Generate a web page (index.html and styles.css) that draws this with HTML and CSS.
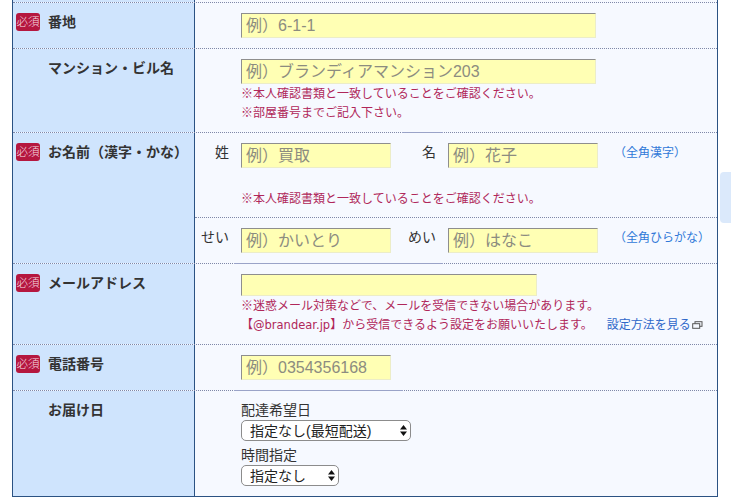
FILE: index.html
```html
<!DOCTYPE html>
<html lang="ja">
<head>
  <meta charset="UTF-8">
  <title>お届け先入力</title>
  <link rel="stylesheet" href="styles.css">
</head>
<body>
  <div class="side-tab"></div>
  <form class="form">
    <div class="top-gap"><div class="head"></div><div></div></div>

    <div class="row">
      <div class="head"><span class="badge">必須</span><span class="label">番地</span></div>
      <div class="cell"><input class="inp inp-l" placeholder="例）6-1-1"></div>
    </div>

    <div class="row">
      <div class="head no-badge"><span class="label">マンション・ビル名</span></div>
      <div class="cell cell-notes">
        <input class="inp inp-l" placeholder="例）ブランディアマンション203">
        <p class="note">※本人確認書類と一致していることをご確認ください。</p>
        <p class="note">※部屋番号までご記入下さい。</p>
      </div>
    </div>

    <div class="row seg-name">
      <div class="head"><span class="badge">必須</span><span class="label">お名前（漢字・かな）</span></div>
      <div class="split">
        <div class="sub sub-notes">
          <div class="pair">
            <span class="pre">姓</span><input class="inp inp-s" placeholder="例）買取">
            <span class="pre pre-2">名</span><input class="inp inp-s" placeholder="例）花子">
            <span class="hint">（全角漢字）</span>
          </div>
          <p class="note note-far">※本人確認書類と一致していることをご確認ください。</p>
        </div>
        <div class="sub sub-line">
          <div class="pair">
            <span class="pre">せい</span><input class="inp inp-s" placeholder="例）かいとり">
            <span class="pre pre-2">めい</span><input class="inp inp-s" placeholder="例）はなこ">
            <span class="hint">（全角ひらがな）</span>
          </div>
        </div>
      </div>
    </div>

    <div class="row seg-mail">
      <div class="head"><span class="badge">必須</span><span class="label">メールアドレス</span></div>
      <div class="cell cell-notes">
        <input class="inp inp-m">
        <p class="note">※迷惑メール対策などで、メールを受信できない場合があります。</p>
        <p class="note">【<span class="domain">@brandear.jp</span>】から受信できるよう設定をお願いいたします。<a class="how" href="#">設定方法を見る<svg class="ext" width="11" height="8" viewBox="0 0 11 8"><rect x="3" y="0.7" width="7" height="4.6" fill="none" stroke="#555" stroke-width="1"/><rect x="0.7" y="2.7" width="7" height="4.6" fill="#f6f9ff" stroke="#555" stroke-width="1"/></svg></a></p>
      </div>
    </div>

    <div class="row">
      <div class="head"><span class="badge">必須</span><span class="label">電話番号</span></div>
      <div class="cell"><input class="inp inp-s" placeholder="例）0354356168"></div>
    </div>

    <div class="row seg-date">
      <div class="head no-badge"><span class="label">お届け日</span></div>
      <div class="cell cell-date">
        <div class="cap">配達希望日</div>
        <div class="sel sel-l">
          <select><option>指定なし(最短配送)</option></select>
          <svg class="updown" width="7" height="11" viewBox="0 0 7 11"><path d="M3.5 0L7 4.5H0zM3.5 11L0 6.5H7z" fill="#111"/></svg>
        </div>
        <div class="cap cap-2">時間指定</div>
        <div class="sel sel-s">
          <select><option>指定なし</option></select>
          <svg class="updown" width="7" height="11" viewBox="0 0 7 11"><path d="M3.5 0L7 4.5H0zM3.5 11L0 6.5H7z" fill="#111"/></svg>
        </div>
      </div>
    </div>
  </form>
</body>
</html>
```

FILE: styles.css
```css
html, body { height: 499px; overflow: hidden; }
body {
  margin: 0;
  background: #fff;
  color: #333;
  font-family: "Liberation Sans", "Noto Sans CJK JP", sans-serif;
  font-size: 14px;
}
.side-tab {
  position: absolute;
  left: 720px; top: 172px;
  width: 11px; height: 51px;
  background: #dbe9fb;
  border-radius: 4px 0 0 4px;
}
.form {
  width: 704px;
  margin-left: 12px;
  border: solid #2b5283;
  border-width: 0 1px 1px 1px;
  background: #f6f9ff;
}
.top-gap, .row {
  display: grid;
  grid-template-columns: 182px 1fr;
}
.top-gap { height: 2px; }
.row {
  position: relative;
  border-top: 1px dotted #7f88a8;
}
.head {
  display: flex;
  align-items: flex-start;
  background: #cfe4fd;
  border-right: 1px solid #2b5283;
  padding: 10px 0 0 3px;
}
.top-gap .head { padding: 0; }
.no-badge { padding-left: 35px; }
.badge {
  width: 24px; height: 18px;
  margin-right: 8px;
  background: #b5173f;
  border-radius: 3px;
  color: #f6dfe4;
  font-size: 11.5px;
  line-height: 18px;
  font-weight: 300;
  text-align: center;
  white-space: nowrap;
}
.label {
  font-weight: bold;
  line-height: 18px;
  color: #333;
  white-space: nowrap;
}
.cell { padding: 10px 0 10px 46px; }
.cell-notes { padding-bottom: 9px; }
.cell-notes .inp { margin-bottom: 1px; }
.cell-date { padding-top: 9px; }

.inp {
  display: block;
  box-sizing: border-box;
  height: 25px;
  padding: 0 4px;
  background: #ffffb4;
  border: 1px solid;
  border-color: #8e8e8e #ecedc8 #ecedc8 #8e8e8e;
  border-radius: 0;
  font: 16px "Liberation Sans", "Noto Sans CJK JP", sans-serif;
  color: #333;
}
.inp::placeholder { color: #8c8c80; opacity: 1; }
.inp-l { width: 355px; }
.inp.inp-m { width: 296px; height: 22px; }
.inp-s { width: 150px; }

.note {
  margin: 0;
  font-size: 12px;
  line-height: 19px;
  color: #b0275a;
  white-space: nowrap;
}
.note-far { margin: 22px 0 0 46px; }
.domain { font-family: "DejaVu Sans", sans-serif; font-size: 11.5px; }
.how { margin-left: 14px; color: #2f67c9; text-decoration: none; }
.ext { margin-left: 1px; }

.split { display: flex; flex-direction: column; }
.sub { padding: 10px 0; }
.sub-notes { padding-bottom: 8px; }
.sub-line { border-top: 1px dotted #7f88a8; }
.pair { display: flex; align-items: flex-start; }
.pre { width: 34px; margin-right: 12px; text-align: right; line-height: 18px; white-space: nowrap; }
.pre-2 { width: 45px; margin-right: 12px; }
.hint {
  margin: 1px 0 0 16px;
  font-size: 12px;
  line-height: 18px;
  color: #2f78d8;
  white-space: nowrap;
}

.cap { line-height: 20px; font-size: 14px; }
.cap-2 { margin-top: 4px; }
.sel { position: relative; }
.sel select {
  display: block;
  box-sizing: border-box;
  height: 21px;
  padding: 0 0 0 8px;
  appearance: none;
  background: #fff;
  border: 1px solid #8c8c8c;
  border-radius: 5px;
  color: #222;
  font: 14px "Liberation Sans", "Noto Sans CJK JP", sans-serif;
}
.sel-l select { width: 170px; }
.sel-s select { width: 98px; }
.updown { position: absolute; top: 5px; }
.sel-l .updown { left: 159px; }
.sel-s .updown { left: 87px; }

/* darker stretches of the row rules */
.seg-name::before, .seg-mail::before, .seg-date::before {
  content: "";
  position: absolute;
  top: -1px;
  height: 1px;
  background: #9aa3c8;
}
.seg-name::before { left: 389px; width: 41px; }
.seg-mail::before { left: 221px; width: 209px; }
.seg-date::before { left: 221px; width: 169px; }
```
